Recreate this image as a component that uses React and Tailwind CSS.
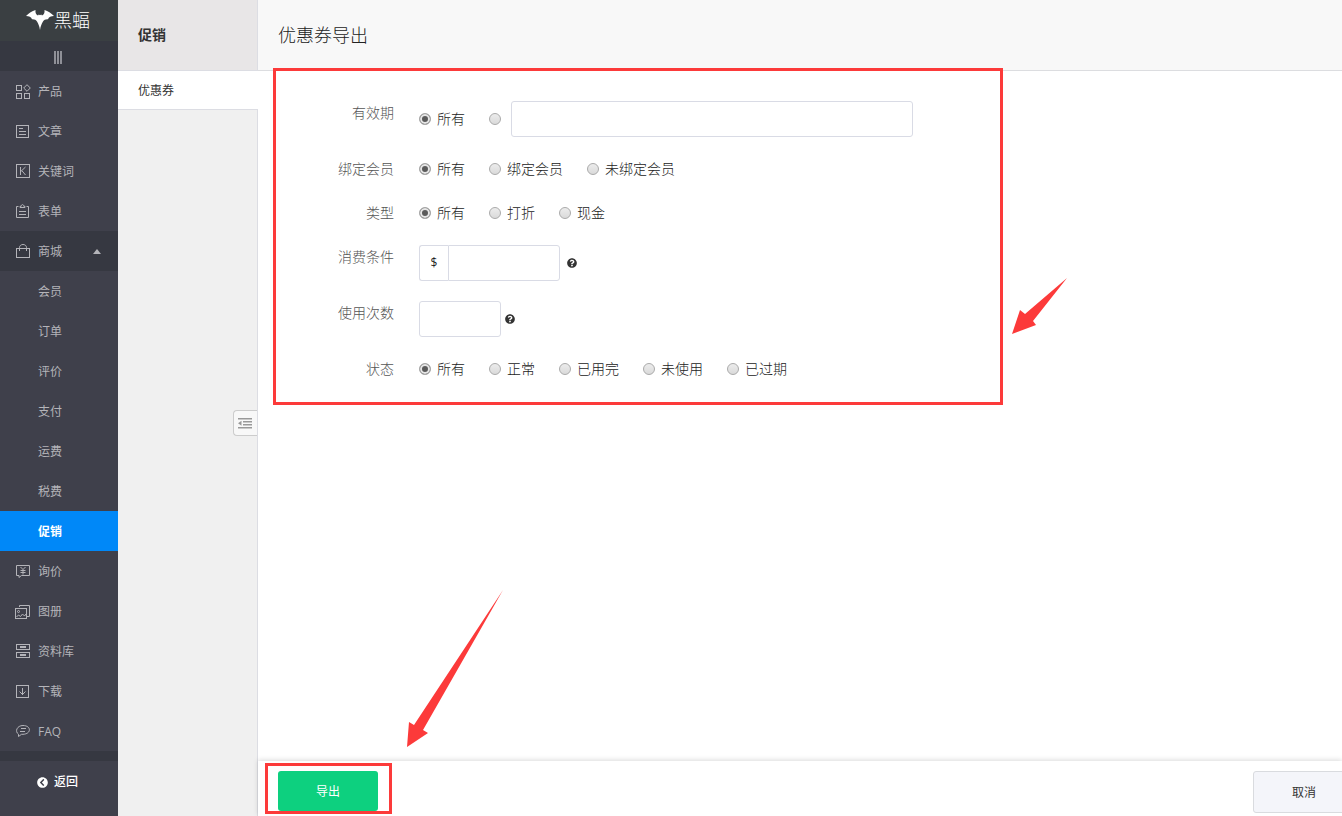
import React, { useState } from "react";
import clsx from "clsx";
import { FaChevronCircleLeft, FaQuestionCircle } from "react-icons/fa";

function MenuIcon({ children }) {
  return (
    <svg
      viewBox="0 0 16 16"
      className="h-4 w-4 shrink-0"
      fill="none"
      stroke="currentColor"
      strokeWidth="1"
      aria-hidden="true"
    >
      {children}
    </svg>
  );
}

const icons = {
  product: (
    <>
      <rect x="1.5" y="2.5" width="5" height="5" />
      <rect x="1.5" y="10.5" width="5" height="5" />
      <rect x="9.5" y="10.5" width="5" height="5" />
      <path d="M12 1.700 15.300 5 12 8.300 8.700 5Z" />
    </>
  ),
  article: (
    <>
      <rect x="1.5" y="2.5" width="12" height="12" />
      <path d="M4 5.5h4M4 8.5h7M4 11.5h7" />
    </>
  ),
  keyword: (
    <>
      <rect x="1.5" y="1.5" width="13" height="13" />
      <path d="M5.5 4v8M10.500 4 6 8.300M7 7.800 10.500 12" />
    </>
  ),
  form: (
    <>
      <path d="M3.5 3.5h-2v11h12v-11h-2M5 4.5V3.3h1.2C6.2 1 8.8 1 8.8 3.3H10v1.2ZM4 8.5h7M4 11.5h7" />
    </>
  ),
  shop: (
    <>
      <rect x="1.5" y="5.5" width="13" height="9" />
      <path d="M4.5 8V4.5c0-4 7-4 7 0V8" />
    </>
  ),
  inquiry: (
    <>
      <path d="M1.5 2.5h13v10h-8l-2.5 2v-2H1.5Z" />
      <path d="M5.5 4 8 6.500 10.500 4M5.500 7.500h5M5.500 9.500h5M8 6.500v5" />
    </>
  ),
  album: (
    <>
      <path d="M4.5 4V2.5h10v11H12" />
      <rect x=".5" y="5.5" width="11" height="10" />
      <circle cx="3.5" cy="8.5" r="1" />
      <path d="m1.500 14 2-2 2 1.500 2-2.500 2 2 1.500-2" />
    </>
  ),
  library: (
    <>
      <rect x="1.5" y="1.5" width="13" height="5" />
      <rect x="1.5" y="9.5" width="13" height="5" />
      <path d="M5 4h6M5 12h6" strokeWidth="2" />
    </>
  ),
  download: (
    <>
      <rect x="1.5" y="2.5" width="12" height="12" />
      <path d="M7.5 5v7M4.500 8.500l3 3 3-3" />
    </>
  ),
  faq: (
    <>
      <path d="M3.5 13.5v-2.3C-.5 8.5 2 2.5 8 2.5c8.5 0 8.5 8.5 0 8.8H6.5Z" />
      <path d="M6 5.500h5M5 8.500h5" />
    </>
  ),
};

const menu = [
  { label: "产品", icon: "product" },
  { label: "文章", icon: "article" },
  { label: "关键词", icon: "keyword" },
  { label: "表单", icon: "form" },
  {
    label: "商城",
    icon: "shop",
    children: ["会员", "订单", "评价", "支付", "运费", "税费", "促销"],
  },
  { label: "询价", icon: "inquiry" },
  { label: "图册", icon: "album" },
  { label: "资料库", icon: "library" },
  { label: "下载", icon: "download" },
  { label: "FAQ", icon: "faq" },
];

function Sidebar() {
  return (
    <aside className="flex w-[118px] shrink-0 flex-col bg-[#3f404b] text-xs text-[#b4b4b9]">
      <a href="#home" className="flex h-[41px] items-center bg-[#3a3f42] pb-0.5 pl-[26px] text-white">
        <svg viewBox="0 0 28 20" className="h-5 w-7" fill="currentColor" aria-hidden="true">
          <path d="M0 6C3 3 6 1 9.500 0c-.4 3 .6 4.800 2.500 5.600l.8-1.200 1.200.8 1.200-.8.8 1.200c1.900-.8 2.900-2.600 2.500-5.600C22 1 25 3 28 6c-3 0-5.300 1-6 3.300-2.300-.2-4 .6-5 2.300-1.400 2.400-2.400 4.600-3 8.400-.6-3.800-1.600-6-3-8.400-1-1.700-2.700-2.500-5-2.300C5.300 7 3 6 0 6Z" />
        </svg>
        <span className="text-lg font-light">黑蝠</span>
      </a>
      <button
        type="button"
        aria-label="菜单"
        className="flex h-[30px] items-center justify-center gap-px bg-[#363841] pt-0.5 pr-0.5"
      >
        <span className="h-[13px] w-0.5 bg-[#8f9097]" />
        <span className="h-[13px] w-0.5 bg-[#8f9097]" />
        <span className="h-[13px] w-0.5 bg-[#8f9097]" />
      </button>
      <nav>
        {menu.map((item) => (
          <div key={item.label}>
            <a
              href={`#${item.icon}`}
              className={clsx("flex h-10 items-center gap-[7px] pr-[17px] pl-[15px]", item.children && "bg-[#363841]")}
            >
              <MenuIcon>{icons[item.icon]}</MenuIcon>
              <span className="pt-0.5">{item.label}</span>
              {item.children && (
                <svg viewBox="0 0 8 6" className="ml-auto h-1.5 w-2" fill="currentColor" aria-hidden="true">
                  <path d="M4 1 8 6H0Z" />
                </svg>
              )}
            </a>
            {item.children?.map((child) => (
              <a
                key={child}
                href="#shop"
                className={clsx(
                  "flex h-10 items-center pt-0.5 pl-[38px]",
                  child === "促销" && "bg-[#0088f8] font-bold text-white"
                )}
              >
                {child}
              </a>
            ))}
          </div>
        ))}
      </nav>
      <div className="h-2.5 bg-[#363841]" />
      <a href="#back" className="flex h-10 items-center gap-1.5 pt-0.5 pl-[37px] font-medium text-white">
        <FaChevronCircleLeft className="h-[11px] w-[11px]" />
        返回
      </a>
    </aside>
  );
}

function SubNav() {
  return (
    <div className="relative w-[140px] shrink-0 border-r border-[#dcdde3] bg-[#f0f0f0]">
      <h2 className="flex h-[71px] items-center border-b border-[#dcdde3] bg-[#e8e6e7] pl-5 text-sm font-bold text-[#333]">
        促销
      </h2>
      <a
        href="#coupon"
        className="-mr-px flex h-[39px] items-center border-b border-[#dcdde3] bg-white pt-0.5 pl-5 text-xs text-[#333]"
      >
        优惠券
      </a>
      <button
        type="button"
        aria-label="收起"
        className="absolute top-[410px] right-0 flex h-[26px] w-6 items-center justify-center rounded-l border border-r-0 border-[#ccc] bg-[#f8f8f8] pr-0.5 text-[#999]"
      >
        <svg viewBox="0 0 14 11" className="h-[11px] w-3.5" fill="currentColor" aria-hidden="true">
          <path d="M0 0h14v1.500H0zM5 3h9v1.500H5zM5 6h9v1.500H5zM0 9h14v1.500H0zM0 5.200 3.500 2.700v5Z" />
        </svg>
      </button>
    </div>
  );
}

function Radio({ name, label, checked, onChange }) {
  return (
    <label className="flex items-center gap-1.5">
      <input
        type="radio"
        name={name}
        checked={checked}
        onChange={onChange}
        aria-label={label || "自定义"}
        className="h-3 w-3 appearance-none rounded-full border border-[#aaa] bg-linear-to-b from-[#ececec] to-[#dadada] checked:bg-none checked:bg-[#5a5a5a] checked:shadow-[inset_0_0_0_2px_#e6e6e6]"
      />
      {label && <span>{label}</span>}
    </label>
  );
}

function RadioRow({ name, options }) {
  const [value, setValue] = useState(options[0]);
  return (
    <div className="flex h-6 items-center gap-6">
      {options.map((o) => (
        <Radio key={o} name={name} label={o} checked={value === o} onChange={() => setValue(o)} />
      ))}
    </div>
  );
}

function Row({ label, htmlFor, children }) {
  const Tag = htmlFor ? "label" : "span";
  return (
    <div className="flex items-start gap-[25px]">
      <Tag htmlFor={htmlFor} className="w-[136px] shrink-0 text-right leading-6 text-[#555]">
        {label}
      </Tag>
      {children}
    </div>
  );
}

function Help() {
  return (
    <button type="button" aria-label="帮助" className="text-[#333]">
      <FaQuestionCircle className="h-2.5 w-2.5" />
    </button>
  );
}

function ExportForm() {
  const [allDates, setAllDates] = useState(true);
  return (
    <form className="flex flex-col gap-5 pt-[30px] text-sm font-light text-[#222]">
      <Row label="有效期" htmlFor="period">
        <div className="flex h-9 items-center gap-6">
          <Radio name="period" label="所有" checked={allDates} onChange={() => setAllDates(true)} />
          <div className="flex items-center gap-2.5">
            <Radio name="period" checked={!allDates} onChange={() => setAllDates(false)} />
            <input id="period" type="text" className="h-9 w-[402px] rounded-[3px] border border-[#d9dbe5] px-2" />
          </div>
        </div>
      </Row>
      <Row label="绑定会员">
        <RadioRow name="member" options={["所有", "绑定会员", "未绑定会员"]} />
      </Row>
      <Row label="类型">
        <RadioRow name="type" options={["所有", "打折", "现金"]} />
      </Row>
      <Row label="消费条件" htmlFor="condition">
        <div className="flex h-9 items-center">
          <span className="flex h-9 w-[29px] items-center justify-center rounded-l-[3px] border border-r-0 border-[#d9dbe5] text-xs font-normal">
            $
          </span>
          <input id="condition" type="text" className="mr-[7px] h-9 w-28 rounded-r-[3px] border border-[#d9dbe5] px-2" />
          <Help />
        </div>
      </Row>
      <Row label="使用次数" htmlFor="times">
        <div className="flex h-9 items-center gap-1">
          <input id="times" type="text" className="h-9 w-[82px] rounded-[3px] border border-[#d9dbe5] px-2" />
          <Help />
        </div>
      </Row>
      <Row label="状态">
        <RadioRow name="status" options={["所有", "正常", "已用完", "未使用", "已过期"]} />
      </Row>
    </form>
  );
}

export default function App() {
  return (
    <div className="flex min-h-screen overflow-hidden bg-white font-['Open_Sans','Noto_Sans_CJK_SC',sans-serif]">
      <Sidebar />
      <SubNav />
      <div className="flex min-w-0 flex-1 flex-col">
        <header className="flex h-[71px] items-center border-b border-[#dcdde0] bg-[#f8f8f8] pl-5">
          <h1 className="text-lg font-light text-[#222]">优惠券导出</h1>
        </header>
        <main className="relative flex-1">
          <ExportForm />
          <div className="pointer-events-none absolute -top-[3px] left-[15px] h-[337px] w-[730px] border-3 border-[#fc3a3a]" />
          <svg
            viewBox="0 0 55 56"
            className="pointer-events-none absolute top-[207px] left-[754px] h-14 w-[55px]"
            fill="#fc3a3a"
            aria-hidden="true"
          >
            <path d="M55 0 21 43 24 47 0 56 8 32 13 36Z" />
          </svg>
        </main>
        <footer className="relative flex h-[55px] items-start justify-between bg-white pt-2.5 pl-5 text-xs shadow-[0_-1px_5px_rgba(0,0,0,0.15)]">
          <button type="button" className="h-10 w-[100px] rounded-[3px] bg-[#0dd07f] pt-0.5 text-white">
            导出
          </button>
          <button
            type="button"
            className="-mr-[13px] h-[42px] w-[102px] rounded-[3px] border border-[#d9dbdf] bg-[#f4f5fa] pt-0.5 text-[#333]"
          >
            取消
          </button>
          <div className="pointer-events-none absolute top-0.5 left-[7px] h-[51px] w-[127px] border-3 border-[#fc3a3a]" />
          <svg
            viewBox="0 0 96 157"
            className="pointer-events-none absolute bottom-[69px] left-[149px] h-[157px] w-24"
            fill="#fc3a3a"
            aria-hidden="true"
          >
            <path d="M96 0 16 140 21 143 0 157 2 132 7 135Z" />
          </svg>
        </footer>
      </div>
    </div>
  );
}
